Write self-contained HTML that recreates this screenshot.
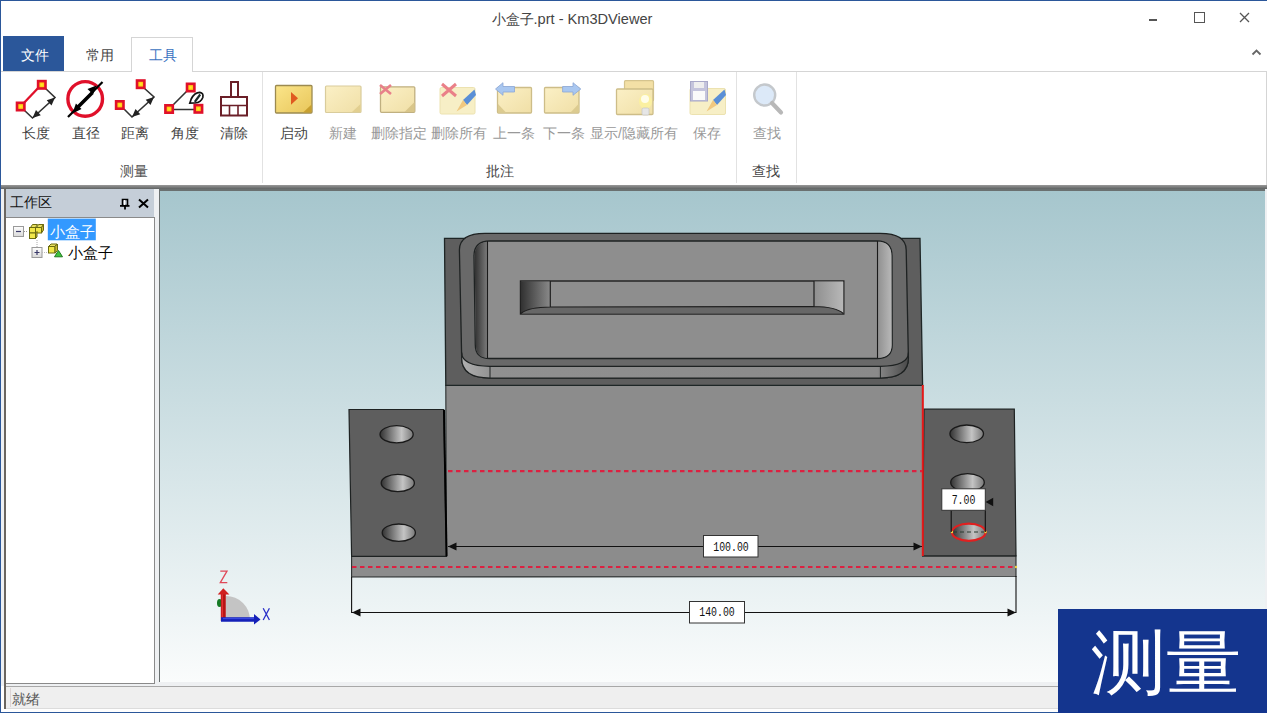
<!DOCTYPE html>
<html><head><meta charset="utf-8">
<style>
*{margin:0;padding:0;box-sizing:border-box}
html,body{width:1267px;height:713px;overflow:hidden;background:#fff;font-family:"Liberation Sans",sans-serif;position:relative}
.a{position:absolute}
.t{position:absolute;white-space:nowrap;line-height:1}
</style></head><body>
<!-- window border -->
<div class="a" style="left:0;top:0;width:1267px;height:1px;background:#2b579a"></div>
<div class="a" style="left:0;top:0;width:1px;height:713px;background:#2b579a"></div>
<div class="a" style="left:0;top:712px;width:1267px;height:1px;background:#2b579a"></div>

<!-- title -->
<div class="t" style="left:491.5px;top:11.5px;font-size:14.6px;color:#444"><span style="font-size:13.8px">小盒子</span>.prt - Km3DViewer</div>
<div class="a" style="left:1149px;top:19px;width:8px;height:2px;background:#555"></div>
<div class="a" style="left:1194px;top:12px;width:11px;height:11px;border:1.3px solid #555"></div>
<svg class="a" style="left:1239px;top:12px" width="11" height="11"><path d="M1 1L10 10M10 1L1 10" stroke="#555" stroke-width="1.3"/></svg>
<svg class="a" style="left:1251px;top:48px" width="11" height="8"><path d="M1.5 6.5L5.5 2.5L9.5 6.5" stroke="#666" stroke-width="1.8" fill="none"/></svg>

<!-- tabs -->
<div class="a" style="left:3px;top:36px;width:61px;height:35px;background:#2b579a"></div>
<div class="t" style="left:20.5px;top:47.5px;font-size:14px;color:#fff">文件</div>
<div class="t" style="left:86px;top:47.5px;font-size:14px;color:#444">常用</div>
<div class="a" style="left:131px;top:37px;width:62px;height:35px;border:1px solid #d5d5d5;border-bottom:none;background:#fff"></div>
<div class="t" style="left:149px;top:47.5px;font-size:14px;color:#3a72c0">工具</div>

<!-- ribbon panel -->
<div class="a" style="left:1px;top:71px;width:130px;height:1px;background:#d5d5d5"></div>
<div class="a" style="left:192px;top:71px;width:1075px;height:1px;background:#d5d5d5"></div>
<div class="a" style="left:1266px;top:71px;width:1px;height:115px;background:#d5d5d5"></div>
<div class="a" style="left:262px;top:72px;width:1px;height:111px;background:#e2e2e2"></div>
<div class="a" style="left:736px;top:72px;width:1px;height:111px;background:#e2e2e2"></div>
<div class="a" style="left:796px;top:72px;width:1px;height:111px;background:#e2e2e2"></div>
<div class="a" style="left:1px;top:185px;width:1266px;height:4px;background:linear-gradient(#999,#5f6363)"></div>

<svg class="a" style="left:0;top:0" width="800" height="190">
<defs>
<radialGradient id="ys" cx="50%" cy="50%" r="50%"><stop offset="0" stop-color="#ffee30"/><stop offset="1" stop-color="#ffb000"/></radialGradient>
<marker id="ah" viewBox="0 0 10 10" refX="9" refY="5" markerWidth="5" markerHeight="5" orient="auto-start-reverse"><path d="M0 0L10 5L0 10z" fill="#222"/></marker>
<linearGradient id="note" x1="0" y1="0" x2="1" y2="1"><stop offset="0" stop-color="#fbe58a"/><stop offset="1" stop-color="#e8c65a"/></linearGradient>
<linearGradient id="noteD" x1="0" y1="0" x2="1" y2="1"><stop offset="0" stop-color="#fbf0c6"/><stop offset="1" stop-color="#f0dfa6"/></linearGradient>
</defs>
<!-- length -->
<path d="M21 106L41 85" stroke="#e0102a" stroke-width="2.3"/>
<path d="M45 88L55 97.5L32.5 118L24 110" stroke="#333" stroke-width="1.6" fill="none" stroke-linejoin="miter"/>
<path d="M55 97.5L46.7 100.3L51.5 105.5ZM32.5 118L40.8 115.2L36 110Z" fill="#222"/>
<!-- diameter -->
<circle cx="85.2" cy="98.9" r="17.3" fill="none" stroke="#e0102a" stroke-width="3.4"/>
<path d="M68 117L102.5 82" stroke="#000" stroke-width="2.2"/>
<path d="M76 109L92 93" stroke="#000" stroke-width="3.6"/>
<path d="M72.5 113.5L81.5 109.1L75.9 103.5z" fill="#000"/>
<path d="M96.5 85.5L87.5 88.9L93.1 94.5z" fill="#000"/>
<!-- distance -->
<path d="M144 88L154 97L132 117L124 109" stroke="#333" stroke-width="1.6" fill="none"/>
<path d="M154 97L145.7 99.8L150.5 105ZM132 117L140.3 114.2L135.5 109Z" fill="#222"/>
<!-- angle -->
<path d="M169 109L190 88M169 109.5L198 109.5" stroke="#333" stroke-width="1.6" fill="none"/>
<path d="M189.8 103.2L191.2 99Q194.5 92.3 199.8 92.3Q203.8 93 202.8 97.5Q201 102.3 195 103Z" fill="#fff" stroke="#111" stroke-width="1.7"/>
<path d="M194.8 101.8L200.2 94.5" stroke="#1a2a2a" stroke-width="2.2"/>
<rect x="38.1" y="81.1" width="7.4" height="7.4" fill="url(#ys)" stroke="#e0102a" stroke-width="2.6"/>
<rect x="17.0" y="102.8" width="7.4" height="7.4" fill="url(#ys)" stroke="#e0102a" stroke-width="2.6"/>
<rect x="137.0" y="80.5" width="7.4" height="7.4" fill="url(#ys)" stroke="#e0102a" stroke-width="2.6"/>
<rect x="116.1" y="101.3" width="7.4" height="7.4" fill="url(#ys)" stroke="#e0102a" stroke-width="2.6"/>
<rect x="187.0" y="83.8" width="7.4" height="7.4" fill="url(#ys)" stroke="#e0102a" stroke-width="2.6"/>
<rect x="165.4" y="105.3" width="7.4" height="7.4" fill="url(#ys)" stroke="#e0102a" stroke-width="2.6"/>
<rect x="194.7" y="105.1" width="7.4" height="7.4" fill="url(#ys)" stroke="#e0102a" stroke-width="2.6"/>
<!-- clear -->
<rect x="231" y="82" width="7" height="15" fill="none" stroke="#6b1f28" stroke-width="2"/>
<rect x="221" y="97" width="26" height="18.5" fill="none" stroke="#6b1f28" stroke-width="2"/>
<path d="M221 105.5H247M229.5 105.5V115.5M238 105.5V115.5" stroke="#6b1f28" stroke-width="1.6"/>
<!-- annotate -->
<g>
<rect x="275.5" y="85.5" width="36.5" height="27.5" rx="1" fill="url(#note)" stroke="#9c8a50" stroke-width="1.3"/>
<path d="M303 112.5L311.5 104.5V112.5z" fill="#c8a030"/>
<path d="M291 92L298 98.3L291 104.8z" fill="#e05a20"/>
</g>
<g>
<rect x="325.5" y="86" width="35.5" height="26.5" rx="1" fill="url(#noteD)" stroke="#d9cc9c" stroke-width="1.2"/>
<path d="M352 112L360.5 104V112z" fill="#e2cf90"/>
</g>
<g>
<rect x="380.5" y="86.8" width="34.3" height="25.5" rx="1" fill="url(#noteD)" stroke="#c0b080" stroke-width="1.3"/>
<path d="M404.5 112L414.5 102V112z" fill="#d9c68a"/>
<path d="M380 85L391 94M391 85L380 94" stroke="#e8808a" stroke-width="2.6"/>
</g>
<g>
<rect x="440" y="87.5" width="35" height="26.5" rx="1.5" fill="#f7efc6" stroke="#ece2b0" stroke-width="1"/>
<path d="M442 84L456 96M456 84L442 96" stroke="#ea8088" stroke-width="3"/>
<path d="M474.5 89.5L463 100L467 105L476 95z" fill="#5a8fd6"/>
<path d="M463 100L456.5 111.5L467 105z" fill="#f0c880"/>
</g>
<g>
<rect x="497.5" y="87.5" width="34" height="25.5" rx="1" fill="url(#noteD)" stroke="#cdbd88" stroke-width="1.3"/>
<path d="M498 112.5V104L506 112.5z" fill="#dccb90"/>
<path d="M495.5 89L503 82.7V86.5H514.5V92H503V95.3z" fill="#a9c7f0" stroke="#8aa6d6" stroke-width="0.8"/>
</g>
<g>
<rect x="544.5" y="87.5" width="34.5" height="25.5" rx="1" fill="url(#noteD)" stroke="#cdbd88" stroke-width="1.3"/>
<path d="M578.5 112.5V104L570.5 112.5z" fill="#dccb90"/>
<path d="M580.8 89L573 82.7V86.5H562.6V92H573V95.3z" fill="#a9c7f0" stroke="#8aa6d6" stroke-width="0.8"/>
</g>
<g>
<rect x="624.5" y="80.7" width="29" height="20" rx="1" fill="#f3e0a6" stroke="#d5c48e" stroke-width="1.2"/>
<rect x="616.5" y="89" width="36.5" height="25.5" rx="1" fill="url(#noteD)" stroke="#cdbd88" stroke-width="1.3"/>
<ellipse cx="645.5" cy="101.5" rx="6.5" ry="7.5" fill="#fbf0a0"/>
<ellipse cx="645" cy="99" rx="4" ry="4" fill="#fffde8"/>
<rect x="642" y="108" width="7" height="7" rx="1.5" fill="#e6e6e6" stroke="#c8c8c8" stroke-width="0.8"/>
</g>
<g>
<rect x="690" y="88.5" width="35.5" height="26" rx="1.5" fill="#f7efc6" stroke="#ece2b0" stroke-width="1"/>
<rect x="690.5" y="81.5" width="17" height="19.5" fill="#c4c4dc" stroke="#a8a8c8" stroke-width="1"/>
<rect x="694" y="82" width="10" height="6" fill="#eeeeee"/>
<rect x="693" y="91" width="12" height="9" fill="#fafafa"/>
<path d="M724.5 89.5L713 100L717 105L726 95z" fill="#5a8fd6"/>
<path d="M713 100L706.5 111.5L717 105z" fill="#f0c880"/>
</g>
<g>
<circle cx="764.7" cy="95" r="10.5" fill="#dce9f8" stroke="#c4c8cc" stroke-width="2.4"/>
<path d="M772 103L781 112.5" stroke="#b8b8b8" stroke-width="4.2" stroke-linecap="round"/>
</g>
</svg>
<div class="t" style="left:22px;top:126px;font-size:14px;color:#444">长度</div>
<div class="t" style="left:72px;top:126px;font-size:14px;color:#444">直径</div>
<div class="t" style="left:121px;top:126px;font-size:14px;color:#444">距离</div>
<div class="t" style="left:171px;top:126px;font-size:14px;color:#444">角度</div>
<div class="t" style="left:220px;top:126px;font-size:14px;color:#444">清除</div>
<div class="t" style="left:280px;top:126px;font-size:14px;color:#444">启动</div>
<div class="t" style="left:329px;top:126px;font-size:14px;color:#999">新建</div>
<div class="t" style="left:371px;top:126px;font-size:14px;color:#999">删除指定</div>
<div class="t" style="left:431px;top:126px;font-size:14px;color:#999">删除所有</div>
<div class="t" style="left:493px;top:126px;font-size:14px;color:#999">上一条</div>
<div class="t" style="left:543px;top:126px;font-size:14px;color:#999">下一条</div>
<div class="t" style="left:590px;top:126px;font-size:14px;color:#999">显示/隐藏所有</div>
<div class="t" style="left:693px;top:126px;font-size:14px;color:#999">保存</div>
<div class="t" style="left:753px;top:126px;font-size:14px;color:#999">查找</div>
<div class="t" style="left:120px;top:164px;font-size:14px;color:#555">测量</div>
<div class="t" style="left:486px;top:164px;font-size:14px;color:#444">批注</div>
<div class="t" style="left:752px;top:164px;font-size:14px;color:#444">查找</div>


<!-- workspace panel -->
<div class="a" style="left:1px;top:189px;width:1266px;height:497px;background:#eef0f2"></div>
<div class="a" style="left:4px;top:189px;width:2px;height:520px;background:#6b6660"></div>
<div class="a" style="left:6px;top:189px;width:148px;height:28px;background:#c5ced8"></div>
<div class="t" style="left:10px;top:196px;font-size:13.5px;color:#111">工作区</div>
<div class="a" style="left:6px;top:217px;width:149px;height:467px;background:#fff;border:1px solid #8a8a8a;border-left:none"></div>
<svg class="a" style="left:110px;top:190px" width="45" height="26">
<path d="M12.5 9.5h5v6h-5z" fill="none" stroke="#000" stroke-width="1.6"/>
<path d="M14.5 10v5.5" stroke="#fff" stroke-width="1.2"/>
<path d="M10 15.8h9.5M15 16v3.5" stroke="#000" stroke-width="1.8"/>
<path d="M29 9.5L38 17.5M38 9.5L29 17.5" stroke="#000" stroke-width="2"/>
</svg>
<svg class="a" style="left:6px;top:218px" width="148" height="50">
<defs><linearGradient id="bx" x1="0" y1="0" x2="0" y2="1"><stop offset="0" stop-color="#fff"/><stop offset="1" stop-color="#d8d8d8"/></linearGradient></defs>
<rect x="7.5" y="8.5" width="10" height="10" fill="url(#bx)" stroke="#9a9a9a"/>
<path d="M10 13.5h5" stroke="#3a3a6a" stroke-width="1.2"/>
<path d="M18 13.5h4" stroke="#999" stroke-dasharray="1 1"/>
<path d="M31 22v7" stroke="#aaa" stroke-dasharray="1 1"/>
<rect x="26" y="29.5" width="10" height="10" fill="url(#bx)" stroke="#9a9a9a"/>
<path d="M28.5 34.5h5M31 32v5" stroke="#3a3a6a" stroke-width="1.2"/>
<path d="M36 34.5h5" stroke="#bbb" stroke-dasharray="1 1"/>
<g stroke="#6b6b10" stroke-width="1" fill="#f2e84a">
<path d="M24.5 9.5l2-3h5l-2 3z" fill="#e8e060"/><rect x="23.5" y="9.5" width="6" height="5.5"/>
<path d="M30.5 9.5l2-3h5l-2 3z" fill="#e8e060"/><rect x="29.5" y="9.5" width="6" height="5.5"/><path d="M35.5 9.5l2-3v5.5l-2 3z" fill="#c8b830"/>
<rect x="23.5" y="15" width="6" height="5.5"/><path d="M29.5 15l1.5-1.5v5.5l-1.5 1.5z" fill="#c8b830"/>
</g>
<rect x="41.8" y="0.6" width="48" height="21.7" fill="#3399ff"/>
<g stroke="#6b6b10" stroke-width="1" fill="#f2e84a">
<path d="M42.5 28.5l2.5-2.5h6l-2.5 2.5z" fill="#e8e060"/><rect x="42.5" y="28.5" width="6.5" height="6.5"/><path d="M49 28.5l2.5-2.5v6.5l-2.5 2.5z" fill="#c8b830"/>
</g>
<path d="M48.5 38.8L52.5 32.5L56.5 38.8z" fill="#3ec43e" stroke="#1f7a1f" stroke-width="1"/>
</svg>
<div class="t" style="left:50px;top:223.5px;font-size:15px;color:#fff">小盒子</div>
<div class="t" style="left:68px;top:245px;font-size:15px;color:#000">小盒子</div>


<!-- status bar -->
<div class="a" style="left:6px;top:686px;width:1261px;height:1px;background:#a8a8a8"></div>
<div class="a" style="left:6px;top:687px;width:1261px;height:21px;background:#efefef"></div>
<div class="a" style="left:6px;top:708px;width:1261px;height:1px;background:#dcdcdc"></div>
<div class="a" style="left:10px;top:688px;width:1px;height:19px;background:#dcd4d4"></div>
<div class="t" style="left:12px;top:691.5px;font-size:14px;color:#555">就绪</div>

<!-- 3D view -->
<div class="a" style="left:159px;top:189px;width:1106px;height:493px;background:#6a7070"></div>
<div class="a" style="left:160px;top:191px;width:1105px;height:491px;background:linear-gradient(#a6c6cd,#fafcfc)"></div>
<svg class="a" style="left:0;top:0" width="1267" height="713">
<defs>
<linearGradient id="lw" x1="0" y1="0" x2="1" y2="0"><stop offset="0" stop-color="#303030"/><stop offset="1" stop-color="#8a8a8a"/></linearGradient>
<linearGradient id="rw" x1="0" y1="0" x2="1" y2="0"><stop offset="0" stop-color="#8e8e8e"/><stop offset="1" stop-color="#b8b8b8"/></linearGradient>
<linearGradient id="fw" x1="0" y1="0" x2="1" y2="0"><stop offset="0" stop-color="#b0b0b0"/><stop offset="0.07" stop-color="#909090"/><stop offset="0.93" stop-color="#8a8a8a"/><stop offset="1" stop-color="#4a4a4a"/></linearGradient>
<linearGradient id="hole" x1="0" y1="0" x2="1" y2="0"><stop offset="0" stop-color="#333"/><stop offset="0.65" stop-color="#c4c4c4"/><stop offset="1" stop-color="#777"/></linearGradient>
</defs>
<!-- body+base -->
<path d="M445.8 385.4L922.6 385.4L922.6 556L1016 555.8L1016 576.5L351.6 577L351.6 556.3L446.4 556.3Z" fill="#8c8c8c" stroke="#2a2e2e" stroke-width="1.1"/>
<!-- flanges -->
<path d="M349 409.5L443.7 409.5L446.4 556.3L351.6 556.3Z" fill="#5e5e5e" stroke="#1e2222" stroke-width="1.2"/>
<path d="M444 410L446.6 556.3" stroke="#000" stroke-width="2"/>
<path d="M924 409.2L1014.3 409.2L1016 555.8L922.6 555.8Z" fill="#5e5e5e" stroke="#1e2222" stroke-width="1.2"/>
<!-- slab top -->
<path d="M444.5 238.4L920 238.4L922.6 385.4L445.8 385.4Z" fill="#5e5e5e" stroke="#1e2626" stroke-width="1.3"/>
<!-- rim -->
<path d="M485 233.4L880 233.4Q906.2 233.4 906.2 250L908.4 358Q908.4 378 880.4 378L490 378Q461.7 378 461.7 358L459.4 250Q459.4 233.4 485 233.4Z" fill="#696969" stroke="#1e2222" stroke-width="1.3"/>
<path d="M461.7 352.6Q462 366.3 490 366.3L880.4 366.3Q908.4 366.3 908.4 352.6L908.4 358Q908.4 378 880.4 378L490 378Q461.7 378 461.7 358Z" fill="url(#fw)" stroke="#1e2222" stroke-width="1.2"/>
<path d="M490 366.3V378M880.4 366.3V378" stroke="#1e2222" stroke-width="1"/>
<!-- pocket -->
<path d="M490 241L877 241Q892 241 892 256L892.2 345Q892.2 358.5 877 358.5L490 358.5Q475.3 358.5 475.3 345L474 256Q474 241 490 241Z" fill="#8e8e8e" stroke="#1e2222" stroke-width="1.3"/>
<path d="M487.5 241.6L490 241.6Q474.6 241.6 474.6 256L475.9 345Q475.9 357.8 487.5 357.8Z" fill="url(#lw)"/>
<path d="M877.5 241.6L877 241.6Q891.4 241.6 891.4 256L891.6 345Q891.6 357.8 877.5 357.8Z" fill="url(#rw)"/>
<path d="M487.5 241V358M877.5 241V358" stroke="#1a1a1a" stroke-width="1.1"/>
<!-- slot -->
<rect x="520.5" y="281" width="323.3" height="33" fill="#8e8e8e" stroke="#1e1e1e" stroke-width="1.4"/>
<path d="M520.5 281.5L550.3 281.5L550.3 307Q529 307 521 313.5Z" fill="url(#lw)"/>
<path d="M814 281.5L843.3 281.5L843.3 313.5Q836 306.8 814 306.5Z" fill="url(#rw)"/>
<path d="M550.3 307L814 306.5Q836 306.8 843.3 313.5L521 313.5Q529 307 550.3 307Z" fill="#676767"/>
<path d="M550.3 281V307L814 306.5V281M521 313.5Q529 307 550.3 307M814 306.5Q836 306.8 843.3 313.5" fill="none" stroke="#1e1e1e" stroke-width="1.2"/>
<!-- holes -->
<g stroke="#1a1a1a" stroke-width="1.3" fill="url(#hole)">
<ellipse cx="396.6" cy="434.3" rx="16.6" ry="8.6"/>
<ellipse cx="397.8" cy="483" rx="16.6" ry="8.6"/>
<ellipse cx="398.8" cy="532.7" rx="16.6" ry="8.7"/>
<ellipse cx="966.7" cy="433.8" rx="16.8" ry="8.8"/>
<ellipse cx="967.5" cy="482.5" rx="16.8" ry="8.8"/>
</g>
<ellipse cx="968.8" cy="532.2" rx="16.8" ry="8.6" fill="url(#hole)" stroke="#e02020" stroke-width="2.2"/>
<path d="M953 532H985" stroke="#2a3a30" stroke-width="1.2" stroke-dasharray="4 3"/>
<circle cx="952" cy="532" r="1.2" fill="#f0d040"/><circle cx="985.5" cy="532" r="1.2" fill="#f0d040"/>
<!-- red lines -->
<path d="M922.8 385V556" stroke="#e81818" stroke-width="2"/>
<path d="M448 471.2H922" stroke="#dc2040" stroke-width="2.2" stroke-dasharray="4.5 3.5"/>
<path d="M352 567H1015" stroke="#dc2040" stroke-width="2.2" stroke-dasharray="4.5 3.5"/>
<circle cx="1016" cy="567" r="1.2" fill="#f0d040"/>
<!-- dims -->
<path d="M448 546.5H922M352 612.5H1016M351.6 577V613M1016 576V613M951.2 510V532M985.3 510V532" stroke="#111" stroke-width="1.1"/>
<path d="M448 546.5L456.5 542.5V550.5ZM922 546.5L913.5 542.5V550.5ZM352 612.5L360.5 608.5V616.5ZM1016 612.5L1007.5 608.5V616.5ZM985.6 502L993.2 497.8V506.2Z" fill="#111"/>
<rect x="703.5" y="535.5" width="54.5" height="21.5" fill="#fff" stroke="#333" stroke-width="1"/>
<rect x="689.5" y="601.5" width="55" height="21.5" fill="#fff" stroke="#333" stroke-width="1"/>
<rect x="941.8" y="488.8" width="43.5" height="21.5" fill="#fff" stroke="#333" stroke-width="1"/>
<!-- axis -->
<path d="M226 620V596A24 24 0 0 1 250 620Z" fill="#c4c4c4"/>
<ellipse cx="219.5" cy="603" rx="2.5" ry="4" fill="#157a25"/>
<path d="M223.3 621V592" stroke="#b81414" stroke-width="5"/><path d="M222.3 620V594" stroke="#e03030" stroke-width="1.5"/>
<path d="M217.7 594.5L223.3 588.3L229.4 594.5Z" fill="#d02020"/>
<path d="M221 619.5H255" stroke="#1420b8" stroke-width="4.5"/><path d="M223 618.5H254" stroke="#3848e0" stroke-width="1.3"/>
<path d="M254 614L260.5 619.5L254 624.5Z" fill="#1420b8"/>
<path d="M220.3 571.2H227L220.3 582.6H227.3" fill="none" stroke="#e04858" stroke-width="1.3"/>
<path d="M263.2 608.2L269.4 620M269.4 608.2L263.2 620" fill="none" stroke="#2a30c8" stroke-width="1.3"/>
</svg>
<div class="t" style="left:705px;top:541.5px;width:52px;text-align:center;font-family:'Liberation Mono',monospace;font-size:12px;color:#111;transform:scaleX(0.82)">100.00</div>
<div class="t" style="left:691px;top:607px;width:52px;text-align:center;font-family:'Liberation Mono',monospace;font-size:12px;color:#111;transform:scaleX(0.82)">140.00</div>
<div class="t" style="left:942px;top:495px;width:43px;text-align:center;font-family:'Liberation Mono',monospace;font-size:12px;color:#111;transform:scaleX(0.82)">7.00</div>


<!-- overlay -->
<div class="a" style="left:1058px;top:609px;width:209px;height:104px;background:#14358e"></div>
<div class="t" style="left:1091px;top:628px;font-size:75px;color:#fff;transform:scaleY(0.944);transform-origin:0 0">测量</div>
</body></html>
